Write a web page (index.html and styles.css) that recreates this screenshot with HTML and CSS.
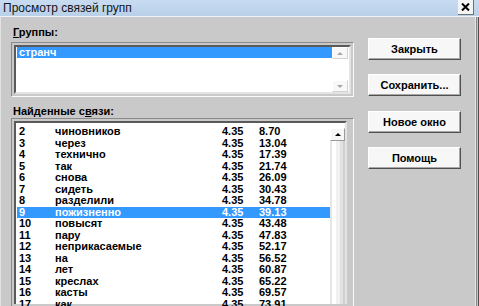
FILE: index.html
```html
<!DOCTYPE html>
<html lang="ru">
<head>
    <meta charset="UTF-8">
    <title>Просмотр связей групп</title>
    <link rel="stylesheet" href="styles.css">
</head>
<body>
    <div class="window">
        <div class="titlebar">
            <span class="title">Просмотр связей групп</span>
            <span class="close">
                <svg width="9" height="8" viewBox="0 0 9 8"><path d="M1 0.5 L8 7.5 M8 0.5 L1 7.5" stroke="#000" stroke-width="2"/></svg>
            </span>
        </div>

        <div class="dialog">
            <div class="left">
                <div class="caption"><u>Г</u>руппы:</div>
                <div class="frame">
                    <div class="list groups">
                        <div class="items">
                            <div class="item selected">странч</div>
                        </div>
                        <div class="scroll disabled">
                            <div class="arrow"><span class="tri up"></span></div>
                            <div class="track"></div>
                            <div class="arrow"><span class="tri down"></span></div>
                        </div>
                    </div>
                </div>

                <div class="caption found-caption">Найденные с<u>в</u>язи:</div>
                <div class="frame found-frame">
                    <div class="list found">
                        <div class="items">
                            <div class="row"><span>2</span><span>чиновников</span><span>4.35</span><span>8.70</span></div>
                            <div class="row"><span>3</span><span>через</span><span>4.35</span><span>13.04</span></div>
                            <div class="row"><span>4</span><span>технично</span><span>4.35</span><span>17.39</span></div>
                            <div class="row"><span>5</span><span>так</span><span>4.35</span><span>21.74</span></div>
                            <div class="row"><span>6</span><span>снова</span><span>4.35</span><span>26.09</span></div>
                            <div class="row"><span>7</span><span>сидеть</span><span>4.35</span><span>30.43</span></div>
                            <div class="row"><span>8</span><span>разделили</span><span>4.35</span><span>34.78</span></div>
                            <div class="row selected"><span>9</span><span>пожизненно</span><span>4.35</span><span>39.13</span></div>
                            <div class="row"><span>10</span><span>повысят</span><span>4.35</span><span>43.48</span></div>
                            <div class="row"><span>11</span><span>пару</span><span>4.35</span><span>47.83</span></div>
                            <div class="row"><span>12</span><span>неприкасаемые</span><span>4.35</span><span>52.17</span></div>
                            <div class="row"><span>13</span><span>на</span><span>4.35</span><span>56.52</span></div>
                            <div class="row"><span>14</span><span>лет</span><span>4.35</span><span>60.87</span></div>
                            <div class="row"><span>15</span><span>креслах</span><span>4.35</span><span>65.22</span></div>
                            <div class="row"><span>16</span><span>касты</span><span>4.35</span><span>69.57</span></div>
                            <div class="row"><span>17</span><span>как</span><span>4.35</span><span>73.91</span></div>
                        </div>
                        <div class="scroll">
                            <div class="arrow"><span class="tri up"></span></div>
                            <div class="track"></div>
                        </div>
                    </div>
                </div>
            </div>

            <div class="buttons">
                <button>Закрыть</button>
                <button>Сохранить...</button>
                <button>Новое окно</button>
                <button>Помощь</button>
            </div>
        </div>
    </div>
</body>
</html>
```

FILE: styles.css
```css
html, body{
    margin: 0;
    height: 100%;
    overflow: hidden;
}
.window{
    height: 306px;
    display: flex;
    flex-direction: column;
    font-family: "Liberation Sans", Arial, sans-serif;
    background-color: #c9c9c9;
}
.titlebar{
    height: 16px;
    display: flex;
    align-items: flex-start;
    padding-left: 3px;
    background: linear-gradient(to bottom, #c8dcf1, #b9d0ea);
}
.title{
    flex: 1;
    font-size: 12px;
    line-height: 17px;
    color: #151515;
}
.close{
    width: 16px;
    height: 15px;
    margin-right: 5px;
    box-sizing: border-box;
    display: flex;
    align-items: center;
    justify-content: center;
    background-color: #f4f4f4;
    border-right: 1px solid #707070;
    border-bottom: 1px solid #707070;
}
.dialog{
    flex: 1;
    display: flex;
    gap: 14px;
    padding-left: 10px;
    border-top: 1px solid #eef3f9;
    border-left: 1px solid #e2e2e2;
    box-shadow: inset -1px 0 #505050, inset -2px 0 #c4c4c4, inset -3px 0 #858585, inset -4px 0 #e6e6e6;
    min-height: 0;
}
.left{
    width: 343px;
    padding-top: 9px;
    display: flex;
    flex-direction: column;
    min-height: 0;
}
.caption{
    font-size: 11px;
    font-weight: bold;
    line-height: 13px;
    margin-left: 2px;
    margin-bottom: 3px;
    color: #000;
}
.found-caption{
    margin-top: 8px;
    margin-bottom: 0;
}
.frame{
    border: 1px solid;
    border-color: #8a8a8a #fafafa #fafafa #8a8a8a;
    padding: 2px;
}
.found-frame{
    flex: 1;
    min-height: 0;
    padding-right: 6px;
    border-bottom: none;
}
.list{
    display: flex;
    background-color: #fff;
    border: 2px solid;
    border-color: #5a5a5a #e4e4e4 #e4e4e4 #5a5a5a;
    padding-left: 1px;
}
.groups{
    height: 45px;
    padding-right: 1px;
}
.found{
    height: 100%;
    box-sizing: border-box;
    padding-top: 3px;
    border-bottom: none;
}
.items{
    flex: 1;
    font-size: 11px;
    font-weight: bold;
    color: #000;
}
.item{
    height: 11px;
    line-height: 11px;
    padding-left: 2px;
}
.selected{
    background-color: #3399ff;
    color: #fff;
}
.row{
    display: grid;
    grid-template-columns: 36px 167px 37px 1fr;
    height: 11.5px;
    line-height: 11.5px;
    padding-left: 2px;
    white-space: nowrap;
}
.scroll{
    width: 16px;
    display: flex;
    flex-direction: column;
}
.found .scroll{
    width: 15px;
    margin-top: 2px;
}
.arrow{
    height: 13px;
    box-sizing: border-box;
    display: flex;
    align-items: center;
    justify-content: center;
    background-color: #f6f6f6;
    border: 1px solid;
    border-color: #fff #9a9a9a #9a9a9a #fff;
}
.track{
    flex: 1;
    background: linear-gradient(90deg, #e6e6e6 0 2px, #fff 2px 6px, #f1f1f1 6px 10px, #e2e2e2 10px 13px, #d0d0d0 13px);
}
.disabled .track{
    background: #fff;
}
.disabled .arrow{
    height: 12px;
    background-color: #f8f8f8;
    border-color: #fff #d2d2d2 #d2d2d2 #fff;
}
.tri{
    width: 0;
    height: 0;
    border-left: 3px solid transparent;
    border-right: 3px solid transparent;
}
.tri.up{
    border-bottom: 3px solid #000;
}
.tri.down{
    border-top: 3px solid #000;
}
.disabled .tri.up{
    border-bottom-color: #a8a8a8;
}
.disabled .tri.down{
    border-top-color: #a8a8a8;
}
.buttons{
    width: 93px;
    padding-top: 21px;
    display: flex;
    flex-direction: column;
    gap: 14.4px;
}
.buttons button{
    height: 22px;
    box-sizing: border-box;
    font-family: "Liberation Sans", Arial, sans-serif;
    font-size: 11px;
    font-weight: bold;
    color: #000;
    background-color: #f7f7f7;
    border: 1px solid;
    border-color: #fff #505050 #505050 #fff;
    box-shadow: inset -1px -1px #a8a8a8;
    padding: 0;
}
```
